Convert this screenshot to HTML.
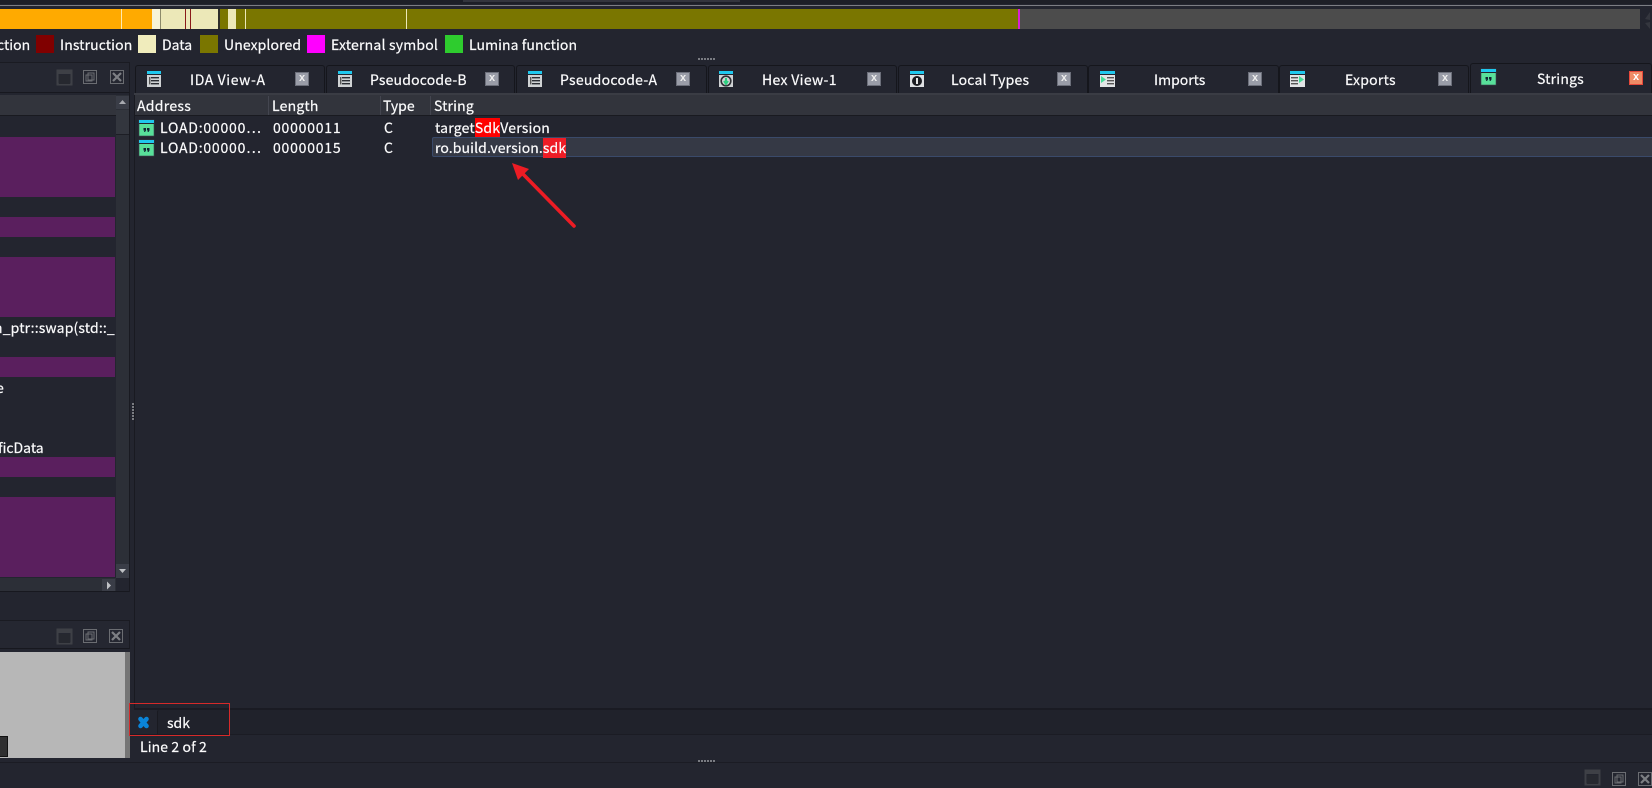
<!DOCTYPE html>
<html><head><meta charset="utf-8"><style>
html,body{margin:0;padding:0;width:1652px;height:788px;overflow:hidden;background:#23252f}
body{position:relative;font-family:"Noto Sans CJK JP","Liberation Sans",sans-serif;font-size:14px;color:#fbfbfc;-webkit-text-stroke:.2px #fbfbfc}
.b{position:absolute}
.t{position:absolute;white-space:nowrap;line-height:20px;height:20px}
.tab{position:absolute;top:65px;height:28px;background:#23252f;border:1px solid #15161c;border-bottom:none;border-radius:3px 3px 0 0;box-sizing:border-box}
.x{position:absolute;top:72px;width:14px;height:14px;background:#9a9da8;border:1px solid #6c6f7a;box-sizing:border-box;color:#eee;font:bold 11px/11px "Liberation Sans",sans-serif;text-align:center;-webkit-text-stroke:0}
.n{letter-spacing:.78px}
svg{position:absolute;overflow:visible}
</style></head><body>
<svg width="0" height="0" style="position:absolute"><defs>
<g id="doc"><rect x="0" y="0" width="14" height="16" fill="#cfd2d4"/><rect x="0" y="0" width="14" height="3" fill="#1fc8ee"/><rect x="0" y="3" width="14" height="1" fill="#23252f"/><rect x="4" y="6" width="8" height="1.4" fill="#2a2d33"/><rect x="4" y="9" width="8" height="1.4" fill="#2a2d33"/><rect x="4" y="12" width="8" height="1.4" fill="#2a2d33"/><rect x="2" y="6" width="1.4" height="7.4" fill="#555"/></g>
<g id="str"><rect x="0" y="0" width="15" height="16" fill="#58e09a" stroke="#3f4750" stroke-width=".6"/><rect x="0" y="0" width="15" height="3" fill="#1fc8ee"/><rect x="0" y="3" width="15" height="1" fill="#23252f"/><path d="M4.5 8H7V10.5L6 12H5L5.5 10.5H4.5ZM8 8H10.5V10.5L9.5 12H8.5L9 10.5H8Z" fill="#123"/></g>
<g id="b1"><rect x=".5" y=".5" width="14" height="14" fill="none" stroke="#3e4046" stroke-width="2"/><rect x="0" y="0" width="15" height="4" fill="#3e4046"/><rect x="2" y="5" width="11" height="9" fill="#26282f"/></g>
<g id="b2" fill="none" stroke="#6b6d72" stroke-width="1"><rect x=".5" y=".5" width="13" height="13"/><rect x="5" y="3" width="6" height="7"/><rect x="3" y="5" width="6" height="6"/></g>
<g id="b3"><rect x=".5" y=".5" width="13" height="13" fill="none" stroke="#6b6d72"/><path d="M3 3L11 11M11 3L3 11" stroke="#7d7f84" stroke-width="2.2"/></g>
</defs></svg>

<!-- top -->
<div class="b" style="left:0;top:0;width:1652px;height:4px;background:#1d1f27"></div>
<div class="b" style="left:463px;top:0;width:277px;height:2px;background:#33353d"></div>
<div class="b" style="left:0;top:5px;width:1652px;height:1px;background:#7c7e84"></div>

<!-- nav bar -->
<div class="b" style="left:0;top:9px;width:1640px;height:20px;background:#4c4c4c"></div>
<div class="b" style="left:0;top:9px;width:152px;height:20px;background:#ffaa00"></div>
<div class="b" style="left:121px;top:9px;width:1px;height:20px;background:#ffe9b0"></div>
<div class="b" style="left:152px;top:9px;width:66px;height:20px;background:#ece8b8"></div>
<div class="b" style="left:152px;top:9px;width:8px;height:20px;background:#f7f4d8"></div>
<div class="b" style="left:160px;top:9px;width:1px;height:20px;background:#8c8a6a"></div>
<div class="b" style="left:185px;top:9px;width:1px;height:20px;background:#8a1a1a"></div>
<div class="b" style="left:190px;top:9px;width:1px;height:20px;background:#8a1a1a"></div>
<div class="b" style="left:218px;top:9px;width:2px;height:20px;background:#2e2e2a"></div>
<div class="b" style="left:220px;top:9px;width:8px;height:20px;background:#7a7600"></div>
<div class="b" style="left:228px;top:9px;width:8px;height:20px;background:#ece8b8"></div>
<div class="b" style="left:236px;top:9px;width:783px;height:20px;background:#7a7600"></div>
<div class="b" style="left:245px;top:9px;width:1px;height:20px;background:#ece8b8"></div>
<div class="b" style="left:406px;top:9px;width:1px;height:20px;background:#ece8b8"></div>
<div class="b" style="left:1018px;top:9px;width:2px;height:20px;background:#d81fd8"></div>
<svg style="left:1642px;top:10px" width="10" height="20"><path d="M8 2L3 9L8 10M8 12L3 13L8 19" fill="#34363e"/></svg>

<!-- legend -->
<div class="t" style="left:-3px;top:35px">ction</div>
<div class="b" style="left:36px;top:35px;width:18px;height:18px;background:#800000"></div>
<div class="t" style="left:60px;top:35px;letter-spacing:.1px">Instruction</div>
<div class="b" style="left:138px;top:35px;width:18px;height:18px;background:#f0ecbc"></div>
<div class="t" style="left:162px;top:35px">Data</div>
<div class="b" style="left:200px;top:35px;width:18px;height:18px;background:#7a7600"></div>
<div class="t" style="left:224px;top:35px;letter-spacing:.1px">Unexplored</div>
<div class="b" style="left:307px;top:35px;width:18px;height:18px;background:#ff00ff"></div>
<div class="t" style="left:331px;top:35px;letter-spacing:.2px">External symbol</div>
<div class="b" style="left:445px;top:35px;width:18px;height:18px;background:#2ecc2e"></div>
<div class="t" style="left:469px;top:35px;letter-spacing:.07px">Lumina function</div>
<div class="b" style="left:698px;top:58px;width:17px;height:2px;background-image:repeating-linear-gradient(90deg,#7a7c82 0 2px,transparent 2px 3px)"></div>

<!-- left panel top -->
<div class="b" style="left:0;top:62px;width:130px;height:31px;background:#252731;border-top:1px solid #1a1b22;border-right:1px solid #1a1b22;border-bottom:1px solid #17181f;box-sizing:border-box"></div>
<svg style="left:57px;top:70px" width="15" height="15"><use href="#b1"/></svg>
<svg style="left:83px;top:70px" width="14" height="14"><use href="#b2"/></svg>
<svg style="left:110px;top:70px" width="14" height="14"><use href="#b3"/></svg>
<div class="b" style="left:0;top:95px;width:116px;height:21px;background:#32343c;border-bottom:1px solid #191a20;box-sizing:border-box"></div>

<div class="b" style="left:0;top:137px;width:115px;height:60px;background:#5a1f5e"></div>
<div class="b" style="left:0;top:217px;width:115px;height:20px;background:#5a1f5e"></div>
<div class="b" style="left:0;top:257px;width:115px;height:60px;background:#5a1f5e"></div>
<div class="t" style="left:0;top:318px;width:115px;overflow:hidden"><span style="margin-left:-6px;letter-spacing:.15px">n_ptr::swap(std::_.</span></div>
<div class="b" style="left:0;top:357px;width:115px;height:20px;background:#5a1f5e"></div>
<div class="t" style="left:-4px;top:378px">e</div>
<div class="t" style="left:-2px;top:438px">ficData</div>
<div class="b" style="left:0;top:457px;width:115px;height:20px;background:#5a1f5e"></div>
<div class="b" style="left:0;top:497px;width:115px;height:80px;background:#5a1f5e"></div>

<!-- scrollbars -->
<div class="b" style="left:116px;top:95px;width:13px;height:483px;background:#2c2f37"></div>
<div class="b" style="left:116px;top:110px;width:13px;height:25px;background:#33363e;border-bottom:1px solid #1d1e25;box-sizing:border-box"></div>
<div class="b" style="left:116px;top:96px;width:13px;height:13px;background:#3a3d47"></div>
<svg style="left:116px;top:96px" width="13" height="13"><path d="M3 8H10L6.5 4Z" fill="#a8aab0"/></svg>
<div class="b" style="left:116px;top:564px;width:13px;height:14px;background:#3a3d47"></div>
<svg style="left:116px;top:564px" width="13" height="14"><path d="M3 5H10L6.5 9Z" fill="#c0c2c6"/></svg>
<div class="b" style="left:0;top:578px;width:116px;height:14px;background:#2c2f37"></div>
<div class="b" style="left:102px;top:579px;width:13px;height:13px;background:#3a3d47"></div>
<svg style="left:102px;top:579px" width="13" height="13"><path d="M5 2.5V10.5L9 6.5Z" fill="#c0c2c6"/></svg>
<div class="b" style="left:0;top:591px;width:130px;height:1px;background:#17181f"></div>
<div class="b" style="left:129px;top:92px;width:1px;height:500px;background:#191a21"></div>

<!-- lower left panel -->
<div class="b" style="left:0;top:620px;width:130px;height:29px;background:#252731;border-top:1px solid #1a1b22;border-right:1px solid #1a1b22;border-bottom:1px solid #17181f;box-sizing:border-box"></div>
<svg style="left:57px;top:629px" width="15" height="15"><use href="#b1"/></svg>
<svg style="left:83px;top:629px" width="14" height="14"><use href="#b2"/></svg>
<svg style="left:109px;top:629px" width="14" height="14"><use href="#b3"/></svg>
<div class="b" style="left:0;top:652px;width:125px;height:106px;background:#b7b7b7"></div>
<div class="b" style="left:125px;top:652px;width:5px;height:106px;background:#757575"></div>
<div class="b" style="left:0;top:736px;width:8px;height:21px;background:#2f2f30;border:1px solid #111;border-left:none;box-sizing:border-box"></div>

<!-- splitters -->
<div class="b" style="left:134px;top:93px;width:1px;height:616px;background:#191a21"></div>
<div class="b" style="left:132px;top:403px;width:2px;height:18px;background-image:repeating-linear-gradient(180deg,#7a7c82 0 2px,transparent 2px 3px)"></div>

<!-- tabs -->
<div class="b" style="left:134px;top:93px;width:1518px;height:2px;background:#3a3c44"></div>
<div class="tab" style="left:135px;width:190px"></div>
<div class="tab" style="left:326px;width:189px"></div>
<div class="tab" style="left:516px;width:191px"></div>
<div class="tab" style="left:708px;width:189px"></div>
<div class="tab" style="left:898px;width:190px"></div>
<div class="tab" style="left:1088px;width:191px"></div>
<div class="tab" style="left:1279px;width:190px"></div>
<div class="tab" style="left:1470px;top:63px;height:30px;width:182px"></div>

<svg style="left:147px;top:71px" width="14" height="16"><use href="#doc"/></svg>
<svg style="left:338px;top:71px" width="14" height="16"><use href="#doc"/></svg>
<svg style="left:528px;top:71px" width="14" height="16"><use href="#doc"/></svg>
<svg style="left:719px;top:71px" width="14" height="16"><rect width="14" height="16" fill="#cfd2d4"/><rect width="14" height="3" fill="#1fc8ee"/><rect y="3" width="14" height="1" fill="#23252f"/><circle cx="7" cy="10" r="4.8" fill="none" stroke="#2c2e33" stroke-width="1.6"/><path d="M7 7V12M5 10L7 13L9 10" stroke="#2ecf80" stroke-width="2" fill="none"/></svg>
<svg style="left:910px;top:71px" width="14" height="16"><rect width="14" height="16" fill="#dfe1e3"/><rect width="14" height="3" fill="#1fc8ee"/><rect y="3" width="14" height="1" fill="#23252f"/><circle cx="7" cy="10" r="5" fill="#1c1d22"/><rect x="6" y="7" width="2" height="6" fill="#e8e8e8"/></svg>
<svg style="left:1100px;top:71px" width="15" height="16"><rect width="15" height="16" fill="#e2e4e6"/><rect width="15" height="3" fill="#1fc8ee"/><rect y="3" width="15" height="1" fill="#23252f"/><path d="M1 5L6 8.5L1 12Z" fill="#44dd99"/><rect x="7" y="6" width="7" height="1.4" fill="#555"/><rect x="7" y="9" width="7" height="1.4" fill="#555"/><rect x="7" y="12" width="7" height="1.4" fill="#555"/></svg>
<svg style="left:1290px;top:71px" width="15" height="16"><rect width="15" height="16" fill="#e2e4e6"/><rect width="15" height="3" fill="#1fc8ee"/><rect y="3" width="15" height="1" fill="#23252f"/><path d="M9 5L14 8.5L9 12Z" fill="#44dd99"/><rect x="1" y="6" width="7" height="1.4" fill="#555"/><rect x="1" y="9" width="7" height="1.4" fill="#555"/><rect x="1" y="12" width="7" height="1.4" fill="#555"/></svg>
<svg style="left:1481px;top:69px" width="15" height="16"><use href="#str"/></svg>

<div class="t" style="left:190px;top:70px;letter-spacing:.6px">IDA View-A</div>
<div class="t" style="left:370px;top:70px;letter-spacing:.18px">Pseudocode-B</div>
<div class="t" style="left:560px;top:70px;letter-spacing:.28px">Pseudocode-A</div>
<div class="t" style="left:762px;top:70px;letter-spacing:.33px">Hex View-1</div>
<div class="t" style="left:951px;top:70px;letter-spacing:.2px">Local Types</div>
<div class="t" style="left:1154px;top:70px">Imports</div>
<div class="t" style="left:1345px;top:70px;letter-spacing:.25px">Exports</div>
<div class="t" style="left:1537px;top:69px;letter-spacing:.2px">Strings</div>

<div class="x" style="left:295px">x</div>
<div class="x" style="left:485px">x</div>
<div class="x" style="left:676px">x</div>
<div class="x" style="left:867px">x</div>
<div class="x" style="left:1057px">x</div>
<div class="x" style="left:1248px">x</div>
<div class="x" style="left:1438px">x</div>
<div class="x" style="left:1629px;top:71px;background:#ee8c66;border-color:#e8483a;color:#fff">x</div>

<!-- table header -->
<div class="b" style="left:135px;top:95px;width:1517px;height:21px;background:#32343c;border-bottom:1px solid #191a20;box-sizing:border-box"></div>
<div class="b" style="left:268px;top:96px;width:1px;height:19px;background:#444650"></div>
<div class="b" style="left:380px;top:96px;width:1px;height:19px;background:#444650"></div>
<div class="b" style="left:430px;top:96px;width:1px;height:19px;background:#444650"></div>
<div class="t" style="left:137px;top:96px;letter-spacing:.3px">Address</div>
<div class="t" style="left:272px;top:96px;letter-spacing:.2px">Length</div>
<div class="t" style="left:383px;top:96px">Type</div>
<div class="t" style="left:434px;top:96px;letter-spacing:.15px">String</div>

<!-- rows -->
<svg style="left:139px;top:120px" width="15" height="16"><use href="#str"/></svg>
<div class="t n" style="left:160px;top:118px">LOAD:00000…</div>
<div class="t n" style="left:273px;top:118px">00000011</div>
<div class="t" style="left:384px;top:118px">C</div>
<div class="t" style="left:435px;top:118px;letter-spacing:.2px">target<span style="background:#ff0000">Sdk</span>Version</div>

<div class="b" style="left:432px;top:137px;width:1220px;height:20px;background:#353945;border:1px solid #3a4a6a;border-right:none;border-radius:2px 0 0 2px;box-sizing:border-box"></div>
<svg style="left:139px;top:140px" width="15" height="16"><use href="#str"/></svg>
<div class="t n" style="left:160px;top:138px">LOAD:00000…</div>
<div class="t n" style="left:273px;top:138px">00000015</div>
<div class="t" style="left:384px;top:138px">C</div>
<div class="t" style="left:435px;top:138px;letter-spacing:.1px">ro.build.version.<span style="background:#ee1c25">sdk</span></div>

<!-- arrow -->
<svg style="left:0;top:0" width="1652" height="788"><path d="M574 226L520 171" stroke="#ed1c24" stroke-width="3.6" stroke-linecap="round" fill="none"/><path d="M512 163L529 169L518 180Z" fill="#ed1c24"/></svg>

<!-- bottom -->
<div class="b" style="left:134px;top:708px;width:1518px;height:2px;background:#1a1b23"></div>
<div class="b" style="left:130px;top:734px;width:1522px;height:1px;background:#1b1c24"></div>
<div class="b" style="left:157px;top:710px;width:1495px;height:24px;background:#20222b;border-left:1px solid #191a21;box-sizing:border-box;border-radius:2px 0 0 0"></div>
<svg style="left:137px;top:716px" width="13" height="13"><path d="M3.5 3L9.5 10M9.5 3L3.5 10" stroke="#0a84d8" stroke-width="4.6" stroke-linecap="round"/></svg>
<div class="t" style="left:167px;top:713px">sdk</div>
<div class="t" style="left:140px;top:737px;letter-spacing:.1px">Line 2 of 2</div>
<div class="b" style="left:129px;top:703px;width:101px;height:33px;border:1px solid #d62a2a;box-sizing:border-box"></div>
<div class="b" style="left:0;top:762px;width:1652px;height:1px;background:#1b1c24"></div>
<div class="b" style="left:698px;top:760px;width:17px;height:2px;background-image:repeating-linear-gradient(90deg,#7a7c82 0 2px,transparent 2px 3px)"></div>
<svg style="left:1585px;top:770px" width="16" height="16"><use href="#b1"/></svg>
<svg style="left:1612px;top:772px" width="14" height="14"><use href="#b2"/></svg>
<svg style="left:1638px;top:772px" width="14" height="14"><use href="#b3"/></svg>
</body></html>
